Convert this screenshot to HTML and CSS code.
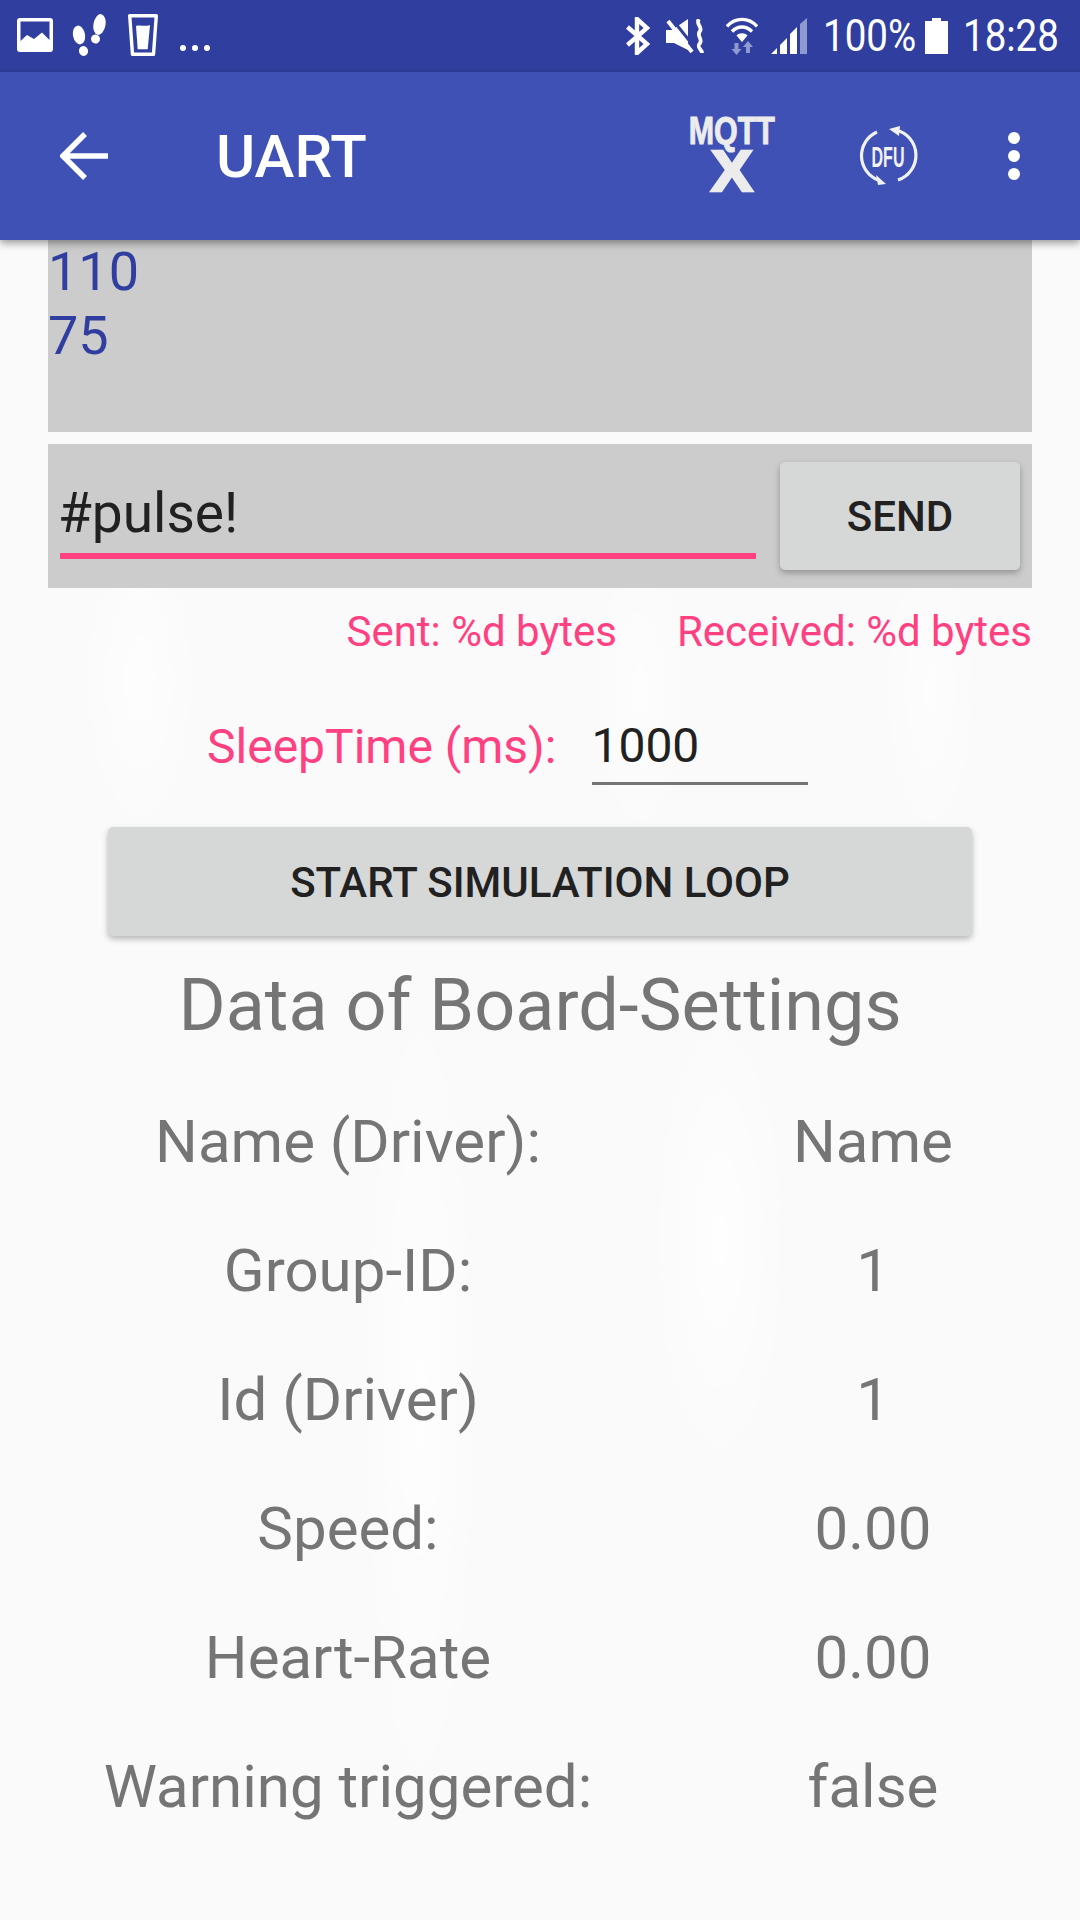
FILE: index.html
```html
<!DOCTYPE html>
<html lang="en">
<head>
<meta charset="utf-8">
<title>UART</title>
<link rel="stylesheet" href="styles.css">
</head>
<body>
<header class="status">
  <div class="status-left">
    <svg class="ic-image" width="36" height="34" viewBox="0 0 36 34"><path fill="#fff" fill-rule="evenodd" d="M3 0H33A3 3 0 0 1 36 3V31A3 3 0 0 1 33 34H3A3 3 0 0 1 0 31V3A3 3 0 0 1 3 0ZM3.5 3.5V23L10 17L17 21L25 14.5L32.5 22V3.5Z"/></svg>
    <svg class="ic-feet" width="35" height="42" viewBox="0 0 35 42"><g fill="#fff"><ellipse cx="7" cy="21" rx="6" ry="9.5" transform="rotate(-10 7 21)"/><ellipse cx="11.5" cy="37" rx="4.5" ry="5" transform="rotate(-15 11.5 37)"/><ellipse cx="27.5" cy="10.5" rx="6" ry="10.5" transform="rotate(10 27.5 10.5)"/><ellipse cx="23.5" cy="25" rx="4.5" ry="4.5" transform="rotate(15 23.5 25)"/></g></svg>
    <svg class="ic-glass" width="30" height="42" viewBox="0 0 30 42"><path fill="none" stroke="#fff" stroke-width="3.4" stroke-linejoin="round" d="M1.7 1.7H28.3L25.5 40.3H4.5Z"/><path fill="#fff" d="M8 12C12 10.5 17 13 22 11L19.7 35.3H9.7Z"/></svg>
    <span class="dots"><i></i><i></i><i></i></span>
  </div>
  <div class="status-right">
    <svg class="ic-bt" width="24" height="38" viewBox="0 0 24 38"><path fill="none" stroke="#fff" stroke-width="4.4" d="M1.500 10L21 27L11 36V2L21 11L1.500 28"/></svg>
    <svg class="ic-mute" width="38" height="34" viewBox="0 0 38 34"><path fill="#fff" d="M0 11H6L22 0V31L8 24H0Z"/><path stroke="#303f9f" stroke-width="3" d="M6 0L30 30"/><path stroke="#fff" stroke-width="4" d="M2 2L26 33"/><path fill="none" stroke="#fff" stroke-width="3.8" d="M33 0C29 5 37 8 34 12C30 17 37 20 34 24C30 29 36 30 36 34"/></svg>
    <svg class="ic-wifi" width="32" height="38" viewBox="0 0 32 38"><g fill="none" stroke="#fff" stroke-width="3.4"><path d="M1 9.500C9 0 23 0 31 9.500"/><path d="M6 14.500C12 8.500 20 8.500 26 14.500"/></g><path fill="#fff" d="M10.500 18.500C13 15.500 19 15.500 21.500 18.500L16 25Z"/><path fill="#8f9ad0" d="M8.500 26H12.500V32H15.500L10.500 38L5.500 32H8.500ZM22 24L27 30H24V36H20V30H17Z"/></svg>
    <svg class="ic-signal" width="36" height="36" viewBox="0 0 36 36"><path fill="#fff" d="M0 36L6 30V36ZM9 36V27L16 20V36ZM19 36V16L26 9V36Z"/><path fill="#8f9ad0" d="M29 36V6L36 0V36Z"/></svg>
    <span class="status-text pct">100%</span>
    <svg class="ic-batt" width="23" height="36" viewBox="0 0 23 36"><path fill="#fff" d="M7 0H16V3H23V36H0V3H7Z"/></svg>
    <span class="status-text clock">18:28</span>
  </div>
</header>
<nav class="toolbar">
  <svg class="ic-back" width="48" height="48" viewBox="0 0 48 48"><path fill="none" stroke="#fff" stroke-width="5.5" d="M48 24H4M25 2L3 24L25 46"/></svg>
  <h1 class="title">UART</h1>
  <div class="mqtt"><span class="mqtt-top">MQTT</span><span class="mqtt-x">X</span></div>
  <svg class="ic-dfu" width="60" height="60" viewBox="0 0 60 60"><g fill="none" stroke="#f2f2f2" stroke-width="3.2"><path d="M19 6A26 26 0 0 0 20 54"/><path d="M38 4A26 26 0 0 1 40 54"/></g><path fill="#f2f2f2" d="M31 3L42 0L41 10ZM28 58L18 49L20 59Z"/><text class="dfu-text" x="30" y="41" text-anchor="middle" textLength="33" lengthAdjust="spacingAndGlyphs">DFU</text></svg>
  <span class="overflow"><i></i><i></i><i></i></span>
</nav>
<main class="content">
  <section class="log">110<br>75</section>
  <section class="send-row">
    <div class="send-field">#pulse!</div>
    <button class="btn btn-send">SEND</button>
  </section>
  <section class="counters">
    <span>Sent: %d bytes</span>
    <span>Received: %d bytes</span>
  </section>
  <section class="sleep">
    <span class="sleep-label">SleepTime (ms):</span>
    <div class="sleep-field">1000</div>
  </section>
  <button class="btn btn-loop">START SIMULATION LOOP</button>
  <h2 class="heading">Data of Board-Settings</h2>
  <dl class="data">
    <dt>Name (Driver):</dt><dd>Name</dd>
    <dt>Group-ID:</dt><dd>1</dd>
    <dt>Id (Driver)</dt><dd>1</dd>
    <dt>Speed:</dt><dd>0.00</dd>
    <dt>Heart-Rate</dt><dd>0.00</dd>
    <dt>Warning triggered:</dt><dd>false</dd>
  </dl>
</main>
</body>
</html>
```
FILE: styles.css
```css
* { box-sizing: border-box; }
html, body { margin: 0; height: 100%; }
body {
  width: 1080px;
  height: 1920px;
  overflow: hidden;
  font-family: Roboto, "Liberation Sans", sans-serif;
  background:
    radial-gradient(ellipse 60px 420px at 420px 1400px, rgba(255,255,255,.8), rgba(255,255,255,0)),
    radial-gradient(ellipse 70px 240px at 720px 1240px, rgba(255,255,255,.8), rgba(255,255,255,0)),
    radial-gradient(ellipse 60px 160px at 140px 680px, rgba(255,255,255,.7), rgba(255,255,255,0)),
    radial-gradient(ellipse 50px 160px at 640px 690px, rgba(255,255,255,.6), rgba(255,255,255,0)),
    radial-gradient(ellipse 50px 160px at 930px 690px, rgba(255,255,255,.6), rgba(255,255,255,0)),
    #fafafa;
}
.status {
  height: 72px;
  background: #303f9f;
  display: flex;
  justify-content: space-between;
  align-items: center;
}
.status-left { display: flex; align-items: center; padding-left: 17px; }
.ic-image, .ic-feet, .ic-glass { flex: none; margin-top: -2px; }
.ic-feet { margin-left: 19px; }
.ic-glass { margin-left: 21px; }
.dots { display: flex; gap: 6px; margin: 24px 0 0 22px; }
.dots i { width: 6px; height: 6px; border-radius: 50%; background: #fff; }
.status-right { display: flex; align-items: center; padding-right: 22px; }
.ic-bt { flex: none; }
.ic-mute { flex: none; margin-left: 16px; }
.ic-wifi { flex: none; margin-left: 22px; }
.ic-signal { flex: none; margin-left: 13px; }
.status-text {
  color: #fff;
  font-size: 44px;
  line-height: 72px;
  display: inline-block;
  white-space: nowrap;
  transform: scaleX(0.875);
  transform-origin: left center;
}
.pct { width: 94px; margin-left: 16px; }
.ic-batt { flex: none; margin-left: 8px; }
.clock { width: 95px; margin-left: 15px; }

.toolbar {
  height: 168px;
  background: #3f51b5;
  display: flex;
  align-items: center;
  box-shadow: 0 3px 8px rgba(0,0,0,.4);
  position: relative;
  z-index: 1;
}
.toolbar > * { flex: none; }
.ic-back { margin-left: 60px; }
.title {
  margin: 0 0 0 108px;
  width: 470px;
  color: #fff;
  font-size: 60px;
  font-weight: 500;
}
.mqtt {
  width: 90px;
  margin: -3px 0 0 1px;
  display: flex;
  flex-direction: column;
  align-items: center;
  color: #ececec;
  font-family: "Liberation Sans", sans-serif;
  font-weight: 700;
}
.mqtt-top { font-size: 38px; line-height: 32px; transform: scaleX(.8); white-space: nowrap; -webkit-text-stroke: 1px #ececec; }
.mqtt-x { font-size: 57px; line-height: 48px; -webkit-text-stroke: 2.5px #ececec; transform: scaleX(1.1); }
.ic-dfu { margin-left: 81px; }
.dfu-text { font-family: "Liberation Sans", sans-serif; font-size: 30px; font-weight: 700; fill: #f2f2f2; }
.overflow { display: flex; flex-direction: column; gap: 6px; margin-left: 90px; }
.overflow i { width: 12px; height: 12px; border-radius: 50%; background: #fff; }

.content { padding: 0 48px; }
.log {
  height: 192px;
  background: #ccc;
  color: #303f9f;
  font-size: 54px;
  line-height: 64px;
}
.send-row {
  margin-top: 12px;
  height: 144px;
  background: #ccc;
  display: flex;
  align-items: flex-start;
  padding: 18px 0 0 12px;
}
.send-field {
  width: 696px;
  height: 97px;
  padding-top: 13px;
  border-bottom: 6px solid #ff4081;
  color: #212121;
  font-size: 55px;
  line-height: 76px;
  text-indent: -2px;
}
.btn {
  display: block;
  border: 0;
  border-radius: 5px;
  background: #d6d7d7;
  color: #212121;
  font-family: Roboto, sans-serif;
  font-size: 42px;
  font-weight: 500;
  padding: 0;
  box-shadow: 0 3px 6px rgba(0,0,0,.28);
}
.btn-send { width: 240px; height: 108px; margin-left: 24px; }
.counters {
  display: flex;
  justify-content: flex-end;
  gap: 60px;
  margin-top: 19px;
  color: #ff4081;
  font-size: 42px;
  line-height: 50px;
}
.sleep {
  display: flex;
  margin-top: 43px;
  margin-left: 159px;
  height: 127px;
  align-items: flex-start;
}
.sleep-label { color: #ff4081; font-size: 48px; line-height: 62px; margin-top: 16px; }
.sleep-field {
  margin-left: 36px;
  width: 216px;
  height: 85px;
  border-bottom: 3px solid #757575;
  color: #212121;
  font-size: 48px;
  line-height: 92px;
  text-indent: -1px;
}
.btn-loop { width: 864px; height: 109px; margin: 0 0 0 60px; padding-top: 2px; }
.heading {
  margin: 30px 0 0;
  text-align: center;
  color: #757575;
  font-size: 72px;
  font-weight: 400;
  line-height: 80px;
}
.data {
  display: grid;
  grid-template-columns: 600px 318px;
  column-gap: 66px;
  grid-auto-rows: 129px;
  margin: 56px 0 0;
  color: #757575;
  font-size: 60px;
  line-height: 80px;
  text-align: center;
}
.data dd { margin: 0; }
```
